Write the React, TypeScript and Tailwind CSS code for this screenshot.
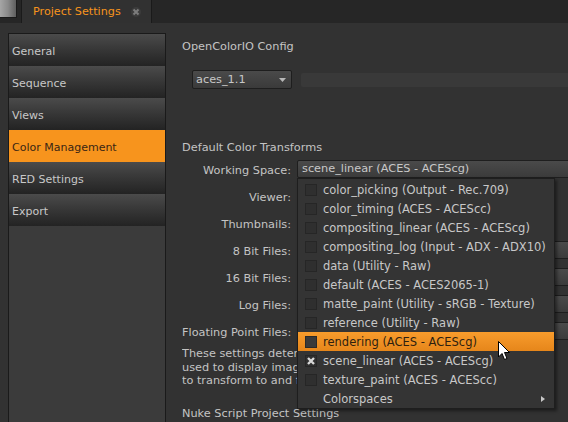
import { ReactNode } from 'react';

const sideItems = ['General', 'Sequence', 'Views', 'Color Management', 'RED Settings', 'Export'];

const menuItems = [
  { label: 'color_picking (Output - Rec.709)' },
  { label: 'color_timing (ACES - ACEScc)' },
  { label: 'compositing_linear (ACES - ACEScg)' },
  { label: 'compositing_log (Input - ADX - ADX10)' },
  { label: 'data (Utility - Raw)' },
  { label: 'default (ACES - ACES2065-1)' },
  { label: 'matte_paint (Utility - sRGB - Texture)' },
  { label: 'reference (Utility - Raw)' },
  { label: 'rendering (ACES - ACEScg)', active: true },
  { label: 'scene_linear (ACES - ACEScg)', checked: true },
  { label: 'texture_paint (ACES - ACEScc)' },
];

const rows = [
  { label: 'Working Space:', value: 'scene_linear (ACES - ACEScg)' },
  { label: 'Viewer:', none: true },
  { label: 'Thumbnails:', none: true },
  { label: '8 Bit Files:' },
  { label: '16 Bit Files:' },
  { label: 'Log Files:' },
  { label: 'Floating Point Files:' },
];

function Combo({ children, className = '' }: { children?: ReactNode; className?: string }) {
  return (
    <div
      className={`h-[18px] rounded-[2px] border border-[#1e1e1e] bg-gradient-to-b from-[#4a4a4a] to-[#3b3b3b] flex items-center pl-[4px] text-[#c8c8c8] whitespace-nowrap ${className}`}
    >
      {children}
    </div>
  );
}

export default function App() {
  return (
    <div className="w-[568px] h-[422px] bg-[#323232] overflow-hidden relative font-['DejaVu_Sans',sans-serif] text-[11px] leading-[14px] text-[#c4c4c4]">
      {/* tab bar */}
      <div className="h-[23px] bg-[#262626] flex items-start">
        <div className="w-[17px] h-[18px] border-r border-b border-[#1a1a1a] bg-gradient-to-r from-[#a6a6a6] via-[#8a8a8a] to-[#5e5e5e]"></div>
        <div className="ml-[4px] w-[131px] h-[23px] bg-[#313131] border-x border-[#1a1a1a] flex items-center pl-[11px]">
          <span className="text-[#f7941d] text-[11.2px]">Project Settings</span>
          <span className="ml-[10px] w-[10px] h-[10px] rounded-full bg-[#3c3c3c] flex items-center justify-center">
            <svg width="8" height="8" viewBox="0 0 8 8">
              <path d="M1.5 1.5 L6.5 6.5 M6.5 1.5 L1.5 6.5" stroke="#7c7c7c" strokeWidth="2" />
            </svg>
          </span>
        </div>
      </div>

      <div className="flex">
        {/* sidebar */}
        <div className="ml-[8px] mt-[10px] w-[158px] h-[400px] border-x border-t border-[#1a1a1a] bg-[#3b3b3b] flex flex-col shrink-0">
          {sideItems.map(item =>
            item === 'Color Management' ? (
              <div key={item} className="h-[32px] bg-[#f7941d] text-[#3a2614] flex items-center pl-[3px] pt-[3px]">
                {item}
              </div>
            ) : (
              <div
                key={item}
                className="h-[32px] bg-gradient-to-b from-[#4b4b4b] to-[#232323] text-[#c8c8c8] flex items-center pl-[3px] pt-[3px]"
              >
                {item}
              </div>
            )
          )}
        </div>

        {/* main */}
        <div className="pl-[16px] flex flex-col text-[11.3px]">
          <div className="mt-[17px]">OpenColorIO Config</div>
          <div className="mt-[16px] ml-[10px] flex items-center">
            <div className="w-[100px] h-[19px] rounded-[2px] border border-[#1e1e1e] bg-gradient-to-b from-[#4a4a4a] to-[#3a3a3a] flex items-center pl-[3px] pr-[5px] justify-between text-[#c8c8c8]">
              <span>aces_1.1</span>
              <svg width="7" height="4" viewBox="0 0 7 4">
                <path d="M0 0 L7 0 L3.5 4 Z" fill="#b8b8b8" />
              </svg>
            </div>
            <div className="ml-[9px] w-[280px] h-[14px] rounded-[2px] bg-[#393939]"></div>
          </div>

          <div className="mt-[52px]">Default Color Transforms</div>

          <div className="mt-[2px] flex flex-col">
            {rows.map(r => (
              <div key={r.label} className="h-[27px] flex items-center">
                <div className="w-[109px] text-right whitespace-nowrap">{r.label}</div>
                {!r.none && (
                  <Combo className="ml-[6px] w-[300px] -mt-[3px]">{r.value}</Combo>
                )}
              </div>
            ))}
          </div>

          {/* text runs on under the open menu, so it is cut at the menu's edge */}
          <div className="mt-[1px] w-[115px] overflow-hidden leading-[13.5px] whitespace-nowrap">
            <div>These settings determine the default color transforms</div>
            <div>used to display images in the Viewer and the colorspaces</div>
            <div>to transform to and from when reading and writing files.</div>
          </div>

          <div className="mt-[19px] whitespace-nowrap">Nuke Script Project Settings</div>
        </div>
      </div>

      {/* popup menu */}
      <div className="absolute left-[297px] top-[178px] w-[258px] border border-[#1e1e1e] bg-[#343434] pt-[1px] text-[11.5px] shadow-[2px_2px_3px_rgba(0,0,0,0.45)] z-10">
        {menuItems.map(m => (
          <div
            key={m.label}
            className={`h-[19px] flex items-center pl-[7px] whitespace-nowrap ${
              m.active ? 'bg-gradient-to-b from-[#f89c2c] to-[#e6861a] text-[#2e1f10]' : 'text-[#c8c8c8]'
            }`}
          >
            <div
              className={`w-[12px] h-[12px] border flex items-center justify-center ${
                m.active ? 'bg-[#3a3a3a] border-[#2a2a2a]' : 'bg-[#2f2f2f] border-[#262626]'
              }`}
            >
              {m.checked && (
                <svg width="10" height="10" viewBox="0 0 10 10">
                  <path d="M2 2 L8 8 M8 2 L2 8" stroke="#d8d8d8" strokeWidth="2.4" />
                </svg>
              )}
            </div>
            <span className="ml-[6px]">{m.label}</span>
          </div>
        ))}
        <div className="h-[19px] flex items-center pl-[25px] pr-[9px] justify-between text-[#c8c8c8]">
          <span>Colorspaces</span>
          <svg width="4" height="6" viewBox="0 0 4 6">
            <path d="M0 0 L4 3 L0 6 Z" fill="#c8c8c8" />
          </svg>
        </div>
      </div>

      {/* mouse cursor */}
      <svg className="absolute left-[498px] top-[341px] z-20" width="13" height="20" viewBox="0 0 13 20">
        <path
          d="M0.5 0.5 L0.5 16 L4 12.5 L6.5 18.5 L9 17.5 L6.5 11.5 L11.5 11.5 Z"
          fill="#ffffff"
          stroke="#000000"
          strokeWidth="1"
          strokeLinejoin="round"
        />
      </svg>
    </div>
  );
}
